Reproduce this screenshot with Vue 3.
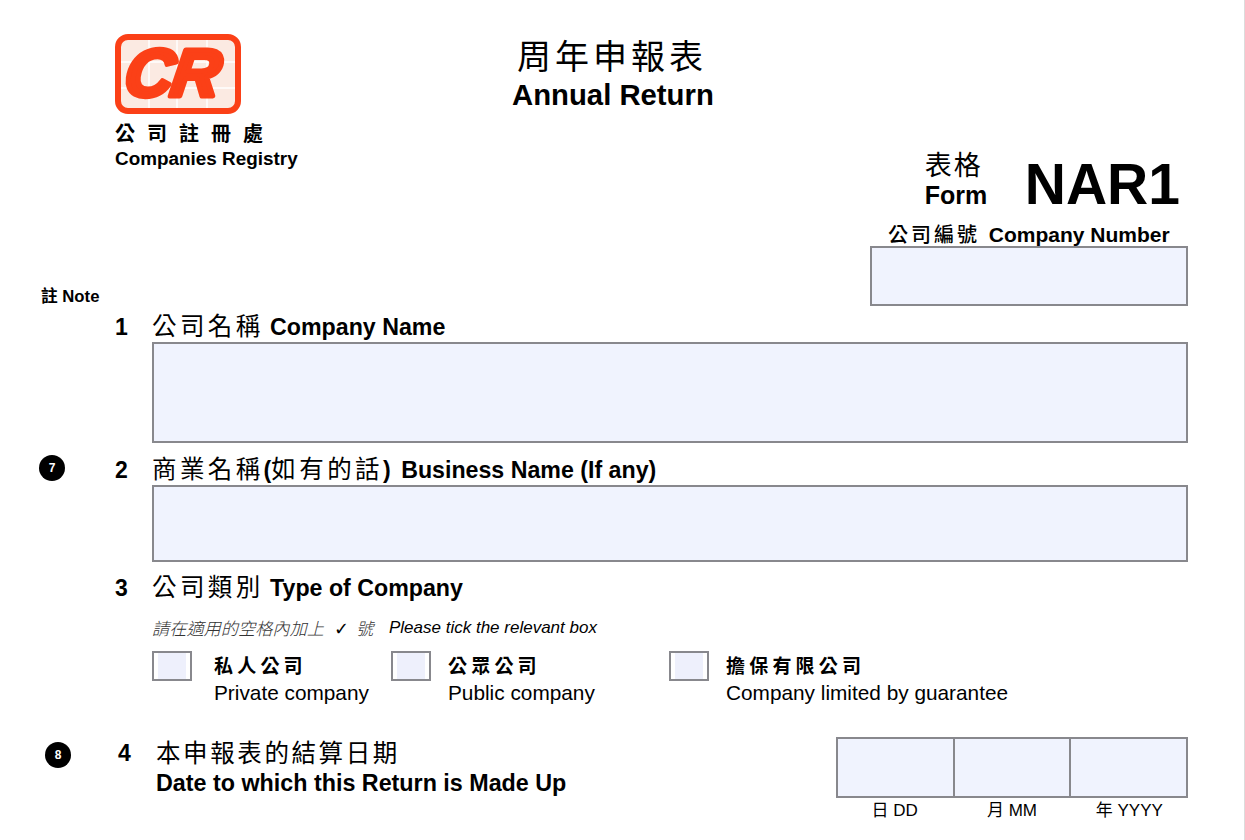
<script setup>
const companyTypes = [
  { zh: '私人公司', en: 'Private company', width: '239px' },
  { zh: '公眾公司', en: 'Public company', width: '278px' },
  { zh: '擔保有限公司', en: 'Company limited by guarantee', width: 'auto' },
]
const dateParts = [
  { zh: '日', en: 'DD' },
  { zh: '月', en: 'MM' },
  { zh: '年', en: 'YYYY' },
]
</script>

<template>
  <main class="page">
    <header class="top">
      <div class="brand">
        <svg class="logo" viewBox="0 0 126 80" width="126" height="80" role="img" aria-label="CR">
          <rect x="3" y="3" width="120" height="74" rx="10" fill="#fbeae2" stroke="#fb4017" stroke-width="6" />
          <path d="M6 28H120M6 54H120M34 6V74M62 6V74M92 6V74" stroke="#fff" stroke-width="1.5" fill="none" />
          <text class="logo-text" transform="translate(54 62) skewX(-8)">CR</text>
        </svg>
        <div class="brand-zh">公司註冊處</div>
        <div class="brand-en">Companies Registry</div>
      </div>
      <div class="title">
        <div class="title-zh">周年申報表</div>
        <div class="title-en">Annual Return</div>
      </div>
    </header>

    <section class="form-id">
      <div class="form-label">
        <span class="form-zh">表格</span>
        <span class="form-en">Form</span>
      </div>
      <div class="form-code">NAR1</div>
    </section>

    <section class="number">
      <div class="number-label"><span class="number-zh">公司編號</span> Company Number</div>
      <div class="field number-field"></div>
    </section>

    <div class="note-head">註 Note</div>

    <section class="row row-name">
      <div class="no">1</div>
      <div class="body">
        <h2 class="heading"><span class="zh">公司名稱</span> Company Name</h2>
        <div class="field name-field"></div>
      </div>
    </section>

    <section class="row row-business">
      <div class="badge">7</div>
      <div class="no">2</div>
      <div class="body">
        <h2 class="heading"><span class="zh">商業名稱</span>(<span class="zh">如有的話</span>)<span class="gap"></span> Business Name (If any)</h2>
        <div class="field business-field"></div>
      </div>
    </section>

    <section class="row row-type">
      <div class="no">3</div>
      <div class="body">
        <h2 class="heading"><span class="zh">公司類別</span> Type of Company</h2>
        <p class="hint">
          <span class="hint-zh">請在適用的空格內加上<span class="tick">✓</span>號</span>
          <span class="hint-en">Please tick the relevant box</span>
        </p>
        <div class="options">
          <div v-for="item in companyTypes" :key="item.zh" class="option" :style="{ width: item.width }">
            <span class="check"><span class="check-inner"></span></span>
            <div class="option-text">
              <div class="option-zh">{{ item.zh }}</div>
              <div class="option-en">{{ item.en }}</div>
            </div>
          </div>
        </div>
      </div>
    </section>

    <section class="row row-date">
      <div class="badge badge-date">8</div>
      <div class="no no-date">4</div>
      <div class="date-body">
        <div class="date-title">
          <div class="date-zh">本申報表的結算日期</div>
          <div class="date-en">Date to which this Return is Made Up</div>
        </div>
        <div class="date-wrap">
          <div class="date-fields">
            <div v-for="part in dateParts" :key="part.en" class="date-cell"></div>
          </div>
          <div class="date-labels">
            <div v-for="part in dateParts" :key="part.en" class="date-label">
              <span class="date-label-zh">{{ part.zh }}</span> {{ part.en }}
            </div>
          </div>
        </div>
      </div>
    </section>
  </main>
</template>

<style>
html, body { margin: 0; background: #fff; overflow: hidden; }
</style>

<style scoped>
.page {
  box-sizing: border-box;
  width: 1245px;
  height: 840px;
  overflow: hidden;
  padding-top: 34px;
  background: #fff;
  border-right: 1px solid #dcdcdc;
  color: #000;
  font-family: "Liberation Sans", "Noto Sans CJK TC", sans-serif;
}
.zh, .brand-zh, .title-zh, .form-zh, .number-zh, .hint-zh, .option-zh, .date-zh, .date-label-zh {
  font-family: "Noto Sans CJK TC", "Liberation Sans", sans-serif;
}
.top { display: flex; padding-left: 115px; height: 135px; }
.brand { width: 200px; }
.logo { display: block; overflow: hidden; }
.logo-text {
  font-family: "Liberation Sans", sans-serif;
  font-size: 67px;
  font-weight: 700;
  font-style: italic;
  fill: #fb4017;
  stroke: #fb4017;
  stroke-width: 5px;
  stroke-linejoin: round;
  text-anchor: middle;
  letter-spacing: -2px;
}
.brand-zh { margin-top: 7px; font-size: 20px; line-height: 24px; font-weight: 700; letter-spacing: 12px; white-space: nowrap; }
.brand-en { margin-top: 2px; font-size: 18.9px; line-height: 24px; font-weight: 700; white-space: nowrap; }
.title { margin-left: 197px; margin-top: -3px; width: 200px; text-align: center; }
.title-zh { font-size: 34px; line-height: 47px; letter-spacing: 4px; white-space: nowrap; font-weight: 400; }
.title-en { font-size: 29.3px; line-height: 34px; font-weight: 700; white-space: nowrap; }

.form-id { display: flex; justify-content: flex-end; align-items: flex-end; padding-right: 64px; height: 46px; margin-top: -4px; }
.form-label { display: flex; flex-direction: column; width: 100px; }
.form-zh { font-size: 27px; line-height: 33px; letter-spacing: 2px; }
.form-en { font-size: 25px; line-height: 31px; font-weight: 700; }
.form-code { font-size: 57px; line-height: 54px; font-weight: 700; }

.number { margin-left: 870px; width: 318px; margin-top: 12px; }
.number-label { font-size: 21px; line-height: 22px; font-weight: 700; white-space: nowrap; margin-left: 18px; }
.number-zh { font-size: 20px; letter-spacing: 3px; font-weight: 500; margin-right: 3px; }
.field { box-sizing: border-box; background: #f0f3fe; border: 2px solid #88888d; }
.number-field { height: 60px; }

.note-head { font-size: 16.7px; line-height: 20px; font-weight: 700; margin: -19px 0 0 41px; height: 20px; }

.row { position: relative; display: flex; padding-left: 115px; }
.no { width: 37px; flex: none; padding-top: 3px; box-sizing: border-box; font-size: 23px; line-height: 28px; font-weight: 700; }
.body { width: 1036px; }
.heading { margin: 0; font-size: 23.2px; line-height: 30px; font-weight: 700; white-space: nowrap; }
.zh { font-weight: 400; font-size: 24.5px; letter-spacing: 3.4px; }
.gap { margin-left: 4px; }
.row-name { margin-top: 3px; }
.name-field { height: 101px; margin-top: 0; }
.row-business { margin-top: 10px; }
.business-field { height: 77px; }
.row-type { margin-top: 9px; }

.badge {
  position: absolute;
  left: 39px;
  top: 2px;
  width: 26px;
  height: 26px;
  border-radius: 50%;
  background: #000;
  color: #fff;
  font-size: 12px;
  font-weight: 700;
  line-height: 26px;
  text-align: center;
}
.badge-date { left: 45px; top: 5px; }

.hint { margin: 15px 0 0; font-size: 17px; line-height: 20px; font-style: italic; white-space: nowrap; display: flex; }
.hint-zh { color: #333; width: 237px; font-size: 17.2px; font-weight: 300; }
.tick { margin: 0 7px 0 10px; color: #000; font-family: "DejaVu Sans", sans-serif; font-size: 18px; }
.hint-en { color: #000; }
.options { display: flex; margin-top: 12px; }
.option { display: flex; flex: none; }
.check { box-sizing: border-box; flex: none; width: 40px; height: 30px; margin-top: 0; border: 2px solid #88888d; background: #fff; padding: 0 4px; }
.check-inner { display: block; height: 100%; background: #eef0fc; }
.option-text { margin-left: 22px; }
.option + .option .option-text { margin-left: 17px; }
.option-zh { font-size: 19px; line-height: 27px; font-weight: 700; letter-spacing: 4.2px; white-space: nowrap; }
.option-en { font-size: 20.8px; line-height: 29px; white-space: nowrap; }

.row-date { margin-top: 30px; padding-left: 118px; }
.no-date { width: 38px; padding-top: 2px; }
.date-body { display: flex; width: 1032px; justify-content: space-between; }
.date-title { margin-top: -2px; }
.date-zh { font-size: 24.5px; line-height: 34px; letter-spacing: 2.6px; white-space: nowrap; }
.date-en { font-size: 23.3px; line-height: 28px; font-weight: 700; white-space: nowrap; }
.date-wrap { width: 352px; }
.date-fields { box-sizing: border-box; display: flex; height: 61px; border: 2px solid #88888d; background: #f0f3fe; }
.date-cell { flex: 1; }
.date-cell + .date-cell { border-left: 2px solid #88888d; }
.date-labels { display: flex; }
.date-label { flex: 1; text-align: center; font-size: 17px; line-height: 22px; white-space: nowrap; }
</style>
